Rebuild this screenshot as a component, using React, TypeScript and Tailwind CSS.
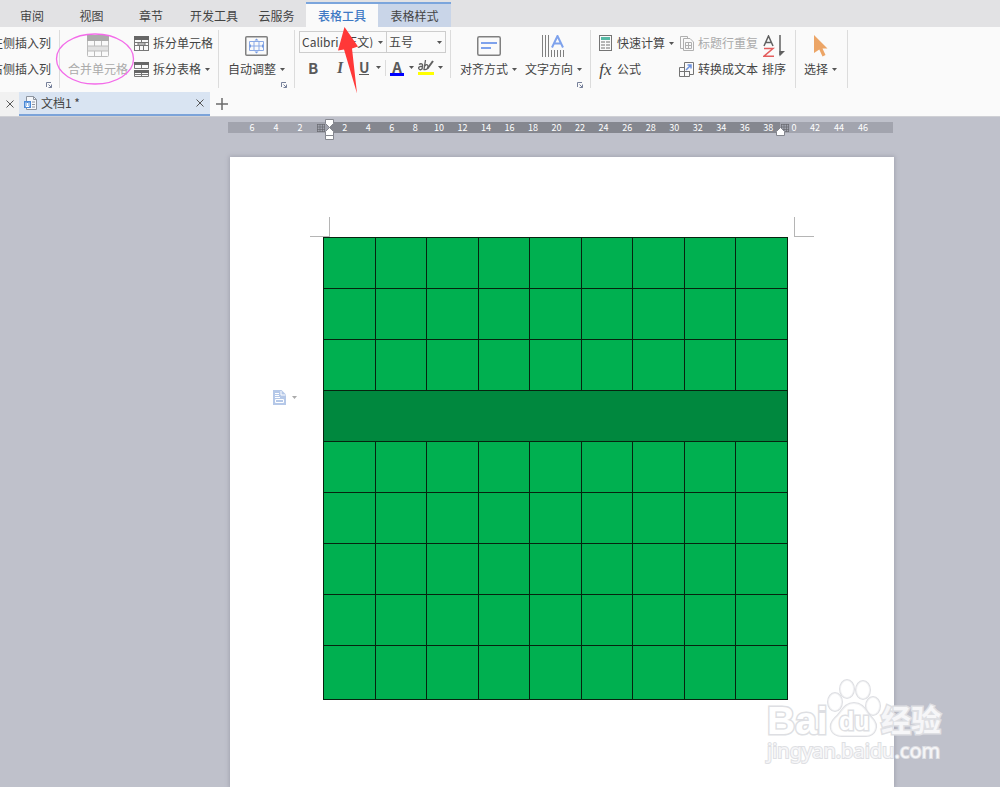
import type { ReactNode } from 'react'

const MENU_TABS = [
  { label: '审阅', className: 'ml-[2px] w-[60px]' },
  { label: '视图', className: 'w-[59px]' },
  { label: '章节', className: 'w-[60px]' },
  { label: '开发工具', className: 'w-[66px]' },
  { label: '云服务', className: 'w-[59px]' },
]

const RULER_LEFT = [6, 4, 2]
const RULER_MAIN = Array.from({ length: 19 }, (_, i) => (i + 1) * 2)
const RULER_RIGHT = [42, 44, 46]

const COLUMNS = Array.from({ length: 9 }, (_, i) => i)
const ROWS = Array.from({ length: 9 }, (_, i) => i)
const MERGED_ROW = 3

function Caret({ className = 'text-[#555]' }: { className?: string }) {
  return (
    <svg width="5" height="3" viewBox="0 0 5 3" className={`shrink-0 ${className}`} aria-hidden="true">
      <path d="M0 0h5L2.5 3z" fill="currentColor" />
    </svg>
  )
}

function Launcher({ label }: { label: string }) {
  return (
    <button aria-label={label} className="block shrink-0">
      <svg width="6" height="6" viewBox="0 0 6 6" fill="none" stroke="#76809a" aria-hidden="true">
        <path d="M.5 5V.5H5M2.5 5.5h3v-3M2.5 2.5l3 3" />
      </svg>
    </button>
  )
}

function CloseIcon() {
  return (
    <svg width="8" height="8" viewBox="0 0 8 8" stroke="#555" aria-hidden="true">
      <path d="M.5.5l7 7M7.5.5l-7 7" />
    </svg>
  )
}

function MergeIcon() {
  return (
    <svg width="22" height="22" viewBox="0 0 22 22" aria-hidden="true">
      <rect x=".5" y=".5" width="21" height="21" rx="1" fill="#fafafa" stroke="#bcbcbc" />
      <path d="M0 0h22v6H0z" fill="#ababab" />
      <path d="M1 11h20v5H1z" fill="#e2e2e2" />
      <path d="M1 11h20M1 16h20M7.5 6v5M14.5 6v5M7.5 16v5M14.5 16v5" stroke="#bcbcbc" />
    </svg>
  )
}

function SplitCellIcon() {
  return (
    <svg width="15" height="15" viewBox="0 0 15 15" fill="none" stroke="#777" aria-hidden="true">
      <rect x=".5" y=".5" width="14" height="14" />
      <path d="M0 0h15v4H0z" fill="#666" stroke="none" />
      <path d="M4 6.5h7v3H4z" fill="#b5b5b5" />
      <path d="M0 6.5h4M11 6.5h4M0 9.5h4M11 9.5h4M7.5 4v2M5.5 10v4M9.5 10v4" />
    </svg>
  )
}

function SplitTableIcon() {
  return (
    <svg width="15" height="15" viewBox="0 0 15 15" fill="none" stroke="#777" aria-hidden="true">
      <path d="M.5.5h14v6H.5zM.5 8.5h14v6H.5zM7.5 3v3M7.5 10v4M0 12.5h15" />
      <path d="M0 0h15v3H0zM0 8h15v3H0z" fill="#666" stroke="none" />
    </svg>
  )
}

function AutoFitIcon() {
  return (
    <svg width="23" height="20" viewBox="0 0 23 20" fill="none" aria-hidden="true">
      <rect x=".75" y=".75" width="21.5" height="18.5" rx="1" stroke="#808080" strokeWidth="1.5" />
      <path d="M4.5 5.5h14v9h-14zM4 10h15M9 5v10M14 5v10" stroke="#8aa9e6" />
      <path d="M11.5 2.5l2 2h-4zM11.5 17.5l2-2h-4zM6 8v4L4 10zM17 8v4l2-2z" fill="#7499e0" />
    </svg>
  )
}

function AlignIcon() {
  return (
    <svg width="24" height="20" viewBox="0 0 24 20" fill="none" aria-hidden="true">
      <rect x=".75" y=".75" width="22.5" height="18.5" rx="1.5" stroke="#808080" strokeWidth="1.5" />
      <path d="M4 7h16M4 12h10" stroke="#7ea2ec" strokeWidth="2" />
    </svg>
  )
}

function TextDirectionIcon() {
  return (
    <svg width="23" height="22" viewBox="0 0 23 22" fill="none" aria-hidden="true">
      <path d="M.5 0v22M3.5 0v22M6.500 0v22M9.5 15v7M12.5 15v7M15.5 15v7M18.5 15v7M21.5 15v7" stroke="#808080" />
      <path d="M10 12.5L15.5 1 21 12.5M12 8.5h7" stroke="#7ea2ec" strokeWidth="2" />
    </svg>
  )
}

function CalculatorIcon() {
  return (
    <svg width="13" height="16" viewBox="0 0 13 16" aria-hidden="true">
      <rect x=".5" y=".5" width="12" height="15" fill="#fafafa" stroke="#747474" />
      <path d="M2 2h9v3H2z" fill="#55b8a4" />
      <path d="M2 6h4v2H2zM7 6h4v2H7zM2 9h4v2H2zM7 9h4v2H7zM2 12h4v2H2zM7 12h4v2H7z" fill="#b5b5b5" />
    </svg>
  )
}

function RepeatHeaderIcon() {
  return (
    <svg width="14" height="15" viewBox="0 0 14 15" fill="#fafafa" stroke="#b0b0b0" aria-hidden="true">
      <path d="M.5 12.5V.5h7v12z" />
      <path d="M3.5 14.5v-12H10L13.5 6v8.5z" />
      <path d="M5.5 6.5h6v6h-6zM5.5 9.5h6M8.5 6.5v6" />
    </svg>
  )
}

function ConvertTextIcon() {
  return (
    <svg width="15" height="15" viewBox="0 0 15 15" fill="none" aria-hidden="true">
      <path d="M5.5 9.5V.5h9v12h-4" stroke="#747474" />
      <path d="M5 5.5H.5v9h10V9M0 9.5h10M5.5 9v5" stroke="#747474" />
      <path d="M7 8l4.500-4.500M8.500 3H12v3.500" stroke="#6d93df" strokeWidth="1.5" />
    </svg>
  )
}

function SortIcon() {
  return (
    <svg width="22" height="22" viewBox="0 0 22 22" fill="none" aria-hidden="true">
      <path d="M1 11L5.5 1 10 11M2.5 7.500h6" stroke="#606060" strokeWidth="1.5" />
      <path d="M1 13.500h9L1 21.200h10" stroke="#e45d5d" strokeWidth="1.5" />
      <path d="M17 0v20" stroke="#606060" strokeWidth="1.5" />
      <path d="M16.500 21.500V16H22z" fill="#606060" />
    </svg>
  )
}

function PointerIcon() {
  return (
    <svg width="14" height="22" viewBox="0 0 14 22" aria-hidden="true">
      <path d="M0 0l13.500 13.500h-5l3 6.500-3 1.500-3.200-7L0 18z" fill="#eca566" />
    </svg>
  )
}

function HighlightIcon() {
  return (
    <svg width="16" height="11" viewBox="0 0 16 11" fill="none" stroke="#606060" strokeWidth="1.300" aria-hidden="true">
      <path d="M1 4.500c2-1.500 4-.5 3.500 1.500L4 9.500M4 6.500C1.500 6 0 7.500 1 9s3 .5 3.500-1" />
      <path d="M7.500 0L6 9.500c3 .5 4.500-1.500 4-3.500S7.500 4.500 7 6" />
      <path d="M15 1L9.500 8.500" strokeWidth="2" />
    </svg>
  )
}

function DocIcon() {
  return (
    <svg width="13" height="14" viewBox="0 0 13 14" aria-hidden="true">
      <path d="M2.500 13.500V.5h7l3 3v10z" fill="#f5f7fa" stroke="#8d949f" />
      <path d="M9.500.5v3h3M8 6h3M8 8.500h3M8 11h3" fill="none" stroke="#8d949f" />
      <path d="M0 5h7v7H0z" fill="#4b8ad8" />
      <path d="M2 6.500v4h3v-4M3.500 7v3" fill="none" stroke="#fff" />
    </svg>
  )
}

function PasteTag() {
  return (
    <svg width="13" height="15" viewBox="0 0 13 15" aria-hidden="true">
      <path d="M0 0h8.500L13 4.500V15H0z" fill="#b5c8e8" />
      <path d="M8 1v4h4.500" fill="none" stroke="#fff" />
      <path d="M2 3.500h4M2 5.500h4M2 7.500h5M2.500 9.500h8v3h-8z" fill="none" stroke="#fff" />
    </svg>
  )
}

function SmallButton({ icon, label, caret, disabled }: { icon: ReactNode; label: string; caret?: boolean; disabled?: boolean }) {
  return (
    <button disabled={disabled} className="flex h-7 items-center gap-1 whitespace-nowrap disabled:text-[#aaa]">
      <span className="flex w-[15px] justify-center">{icon}</span>
      {label}
      {caret && <Caret />}
    </button>
  )
}

function LargeButton({ icon, label, caret, disabled }: { icon: ReactNode; label: string; caret?: boolean; disabled?: boolean }) {
  return (
    <button disabled={disabled} className="flex flex-col items-center self-start whitespace-nowrap disabled:text-[#aaa]">
      <span className="flex h-[31px] items-center">{icon}</span>
      <span className="flex h-4 items-center gap-1">
        {label}
        {caret && <Caret />}
      </span>
    </button>
  )
}

function Group({ className, launcher, children }: { className: string; launcher?: string; children: ReactNode }) {
  return (
    <div className={`flex h-[58px] shrink-0 flex-col border-r border-[#dcdcdc] ${className}`}>
      <div className="flex h-[52px]">{children}</div>
      {launcher && (
        <div className="flex justify-end pr-[7px]">
          <Launcher label={launcher} />
        </div>
      )}
    </div>
  )
}

function Combo({ label, value, className }: { label: string; value: string; className: string }) {
  return (
    <div className={`relative ${className}`}>
      <select aria-label={label} className="h-full w-full appearance-none bg-transparent px-[2px] outline-none">
        <option>{value}</option>
      </select>
      <span className="pointer-events-none absolute inset-y-0 right-[3px] flex items-center">
        <Caret />
      </span>
    </div>
  )
}

function Ribbon() {
  return (
    <div className="flex h-[65px] items-start overflow-hidden bg-[#fafafa] pt-[3px] text-[12px] leading-none text-[#444]">
      <Group className="w-[60px]" launcher="行和列设置">
        <div className="flex w-[51px] flex-col items-end">
          <button className="flex h-[26px] shrink-0 items-center whitespace-nowrap">左侧插入列</button>
          <button className="flex h-[26px] shrink-0 items-center whitespace-nowrap">右侧插入列</button>
        </div>
      </Group>
      <Group className="w-[159px] pl-2">
        <LargeButton icon={<MergeIcon />} label="合并单元格" disabled />
        <div className="ml-[6px] flex flex-col">
          <SmallButton icon={<SplitCellIcon />} label="拆分单元格" />
          <SmallButton icon={<SplitTableIcon />} label="拆分表格" caret />
        </div>
      </Group>
      <Group className="w-[76px] pl-[9px]" launcher="自动调整设置">
        <LargeButton icon={<AutoFitIcon />} label="自动调整" caret />
      </Group>
      <div className="flex h-12 w-[156px] shrink-0 flex-col border-r border-[#dcdcdc] pl-1 pt-px">
        <div className="flex h-[22px] w-[147px] border border-[#cdcdcd]">
          <Combo label="字体" value="Calibri (正文)" className="w-[87px] border-r border-[#cdcdcd]" />
          <Combo label="字号" value="五号" className="flex-1" />
        </div>
        <div className="flex h-[25px] items-center pt-1 text-[#5a5a5a]">
          <button aria-label="加粗" className="w-7 text-[15px] font-bold">B</button>
          <button aria-label="倾斜" className="w-[26px] font-['Liberation_Serif',serif] text-[16px] font-bold italic">I</button>
          <button aria-label="下划线" className="flex w-8 items-center justify-between pl-[6px] pr-1">
            <span className="border-b border-[#5a5a5a] text-[14px] font-bold leading-[13px]">U</span>
            <Caret />
          </button>
          <button aria-label="字体颜色" className="flex w-[29px] items-center justify-between border-l border-[#dcdcdc] pl-1">
            <span className="w-[14px] border-b-3 border-[#0000ff] text-[15px] font-bold leading-[13px]">A</span>
            <Caret />
          </button>
          <button aria-label="突出显示" className="ml-1 flex w-[25px] items-center justify-between">
            <span className="border-b-3 border-[#ffff00] pb-px">
              <HighlightIcon />
            </span>
            <Caret />
          </button>
        </div>
      </div>
      <Group className="w-[140px] pl-[9px]" launcher="对齐设置">
        <LargeButton icon={<AlignIcon />} label="对齐方式" caret />
        <div className="ml-2 flex">
          <LargeButton icon={<TextDirectionIcon />} label="文字方向" caret />
        </div>
      </Group>
      <Group className="w-[205px] pl-[7px]">
        <div className="flex w-[81px] flex-col">
          <SmallButton icon={<CalculatorIcon />} label="快速计算" caret />
          <SmallButton
            icon={<span className="font-['Liberation_Serif',serif] text-[17px] italic">fx</span>}
            label="公式"
          />
        </div>
        <div className="flex flex-col">
          <SmallButton icon={<RepeatHeaderIcon />} label="标题行重复" disabled />
          <SmallButton icon={<ConvertTextIcon />} label="转换成文本" />
        </div>
        <div className="ml-1 flex">
          <LargeButton icon={<SortIcon />} label="排序" />
        </div>
      </Group>
      <Group className="w-[52px] pl-2">
        <LargeButton icon={<PointerIcon />} label="选择" caret />
      </Group>
    </div>
  )
}

function DocumentTabs() {
  return (
    <div className="flex h-6 bg-[#fafafa] text-[12px] text-[#444]">
      <button aria-label="关闭上一个文档" className="flex w-[19px] items-center justify-center bg-[#f1f1f1]">
        <CloseIcon />
      </button>
      <div className="flex w-[191px] items-center border-b-2 border-[#7ba3d9] bg-[#d9e4f2] pl-[5px] pr-[6px]">
        <DocIcon />
        <span className="ml-1 flex-1">文档1 *</span>
        <button aria-label="关闭">
          <CloseIcon />
        </button>
      </div>
      <button aria-label="新建" className="flex w-6 items-center justify-center">
        <svg width="12" height="12" viewBox="0 0 12 12" stroke="#6b6b6b" strokeWidth="1.500" aria-hidden="true">
          <path d="M6 0v12M0 6h12" />
        </svg>
      </button>
    </div>
  )
}

function Hatch() {
  return (
    <svg width="8" height="8" viewBox="0 0 8 8" stroke="#686a70" aria-hidden="true">
      <path d="M0 .5h8M0 3h8M0 5.500h8M0 7.500h8M.5 0v8M3 0v8M5.500 0v8M7.500 0v8" strokeWidth=".7" />
    </svg>
  )
}

function Ruler() {
  return (
    <div className="relative ml-[228px] flex h-[11px] w-[665px] text-center text-[9px] leading-[11px] text-white">
      <div className="flex w-[101px] items-center bg-[#a2a4ae] pl-3">
        {RULER_LEFT.map((n) => (
          <span key={n} className="w-6">{n}</span>
        ))}
        <span className="ml-[5px]">
          <Hatch />
        </span>
      </div>
      <div className="flex w-[451px] bg-[#85878f] pl-1">
        {RULER_MAIN.map((n) => (
          <span key={n} className="min-w-0 flex-1">{n}</span>
        ))}
      </div>
      <div className="flex flex-1 items-center bg-[#a2a4ae] pl-px">
        <Hatch />
        <span className="ml-[2px] w-[6px]">0</span>
        <span className="ml-[6px] flex">
          {RULER_RIGHT.map((n) => (
            <span key={n} className="w-6">{n}</span>
          ))}
        </span>
      </div>
      <svg width="9" height="21" viewBox="0 0 9 21" className="absolute -top-[3px] left-[97px]" fill="#fff" stroke="#85878f" aria-hidden="true">
        <path d="M.5.5h8v4l-4 4-4-4zM.5 16.500v-4l4-4 4 4v4zM.5 16.500h8v4h-8z" />
      </svg>
      <svg width="9" height="9" viewBox="0 0 9 9" className="absolute left-[548px] top-[5px]" fill="#fff" stroke="#85878f" aria-hidden="true">
        <path d="M.5 8.500v-4l4-4 4 4v4z" />
      </svg>
    </div>
  )
}

function Page() {
  return (
    <div className="ml-[230px] mt-6 flex w-[664px] flex-1 flex-col bg-white pt-[60px] shadow-[0_0_4px_1px_#a3a5b1]">
      <div className="flex justify-between px-20">
        <span className="h-5 w-5 border-b border-r border-[#b5b5b5]" />
        <span className="h-5 w-5 border-b border-l border-[#b5b5b5]" />
      </div>
      <div className="flex">
        <div className="w-[93px] pl-[43px] pt-[153px]">
          <button aria-label="粘贴选项" className="flex items-center gap-[6px]">
            <PasteTag />
            <Caret className="text-[#aaa]" />
          </button>
        </div>
        <table className="w-[465px] table-fixed border-collapse">
          <tbody>
            {ROWS.map((row) => (
              <tr key={row} className="h-[51px] last:h-[54px]">
                {row === MERGED_ROW ? (
                  <td colSpan={9} className="border border-[#06240f] bg-[#00883e]" />
                ) : (
                  COLUMNS.map((col) => <td key={col} className="border border-[#06240f] bg-[#00b050]" />)
                )}
              </tr>
            ))}
          </tbody>
        </table>
      </div>
    </div>
  )
}

function Watermark() {
  return (
    <div className="pointer-events-none absolute left-[767px] top-[678px] w-[180px] font-['Noto_Sans','Noto_Sans_CJK_SC',sans-serif] text-[#f6f6f8] [-webkit-text-stroke:3px_#dedfe3] [paint-order:stroke_fill]">
      <div className="flex h-[60px] items-end">
        <span className="w-[60px] font-['Liberation_Sans',sans-serif] text-[39px] font-bold leading-[35px] text-white">Bai</span>
        <div className="relative h-[60px] w-[54px]">
          <svg width="54" height="60" viewBox="0 0 54 60" fill="#fff" fillOpacity=".6" stroke="#dedfe3" strokeWidth="2" aria-hidden="true">
            <ellipse cx="8" cy="24" rx="7" ry="9" />
            <ellipse cx="20" cy="11" rx="7" ry="9" />
            <ellipse cx="36" cy="12" rx="7" ry="9" />
            <ellipse cx="46" cy="28" rx="7" ry="9" />
            <path d="M27 25c10 0 12 9 18 15 8 8 3 18-6 18H15C4 58 0 48 8 40c7-6 9-15 19-15z" />
          </svg>
          <span className="absolute left-[12px] top-[30px] font-['Liberation_Sans',sans-serif] text-[25px] font-bold leading-[26px] text-white">du</span>
        </div>
        <span className="text-[30px] font-bold leading-[36px]">经验</span>
      </div>
      <div className="pt-px text-[20px] leading-[24px] [-webkit-text-stroke:2px_#dedfe3]">jingyan.baidu.com</div>
    </div>
  )
}

// hand-drawn marks that point out the tab and the merge button
function Annotations() {
  return (
    <svg width="400" height="100" viewBox="0 0 400 100" className="pointer-events-none absolute left-0 top-0" aria-hidden="true">
      <ellipse cx="95" cy="59" rx="38.500" ry="25" fill="none" stroke="#f36be9" strokeWidth="1.300" />
      <path d="M344.500 27L358 46.500l-6 2L357 93.500 344 49.500l-6 1z" fill="#ff3838" />
    </svg>
  )
}

export default function App() {
  return (
    <div className="relative flex min-h-screen flex-col overflow-hidden bg-[#bfc1cb] font-['Noto_Sans_CJK_SC',sans-serif]">
      <nav className="flex h-[27px] items-end bg-[#e2e2e4] text-[12px] text-[#444]">
        {MENU_TABS.map((tab) => (
          <button key={tab.label} className={`h-6 pt-px ${tab.className}`}>
            {tab.label}
          </button>
        ))}
        <button className="h-[25px] w-[72px] border-t-2 border-[#7ba5dc] bg-[#fafafa] pt-px font-medium text-[#3f79c4]">表格工具</button>
        <button className="h-[25px] w-[73px] border-t-2 border-[#7ba5dc] bg-[#c9d5e8] pt-px">表格样式</button>
      </nav>
      <Ribbon />
      <DocumentTabs />
      <main className="flex flex-1 flex-col border-t border-[#cfd0d5] pt-[5px]">
        <Ruler />
        <Page />
      </main>
      <Watermark />
      <Annotations />
    </div>
  )
}
